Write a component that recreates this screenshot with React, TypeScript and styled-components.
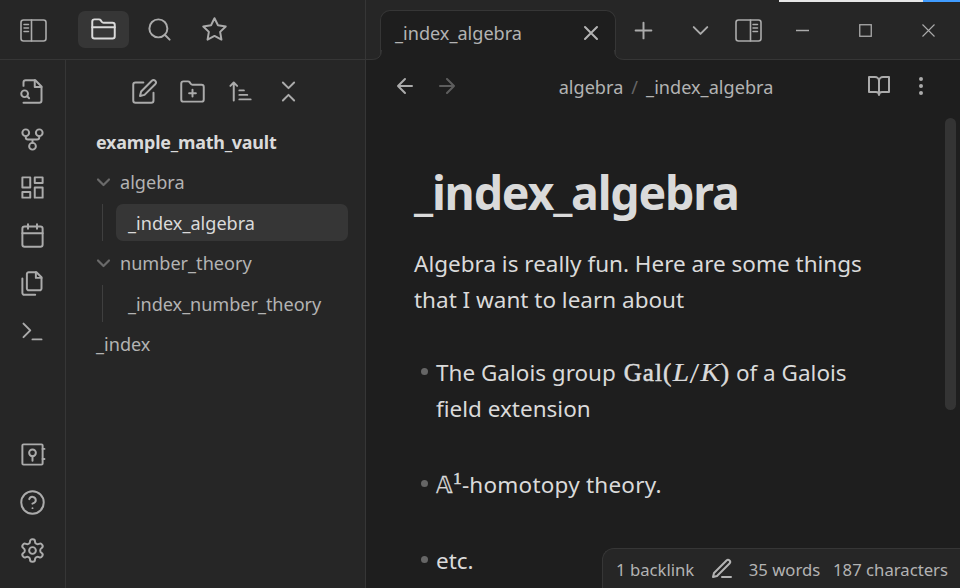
import React from 'react';
import styled, { createGlobalStyle } from 'styled-components';

const GlobalStyle = createGlobalStyle`
  * { box-sizing: border-box; }
  html, body { margin: 0; background: #1e1e1e; }
  body { font-family: 'Noto Sans', 'Open Sans', sans-serif; overflow: hidden; }
  svg { flex: none; }
`;

const line = '#363636';

const Window = styled.div`
  position: relative;
  display: flex;
  width: 960px;
  height: 588px;
  overflow: hidden;
  color: #b3b3b3;
  background: #1e1e1e;
  font-size: 18.1px;
  white-space: nowrap;
`;

const BackgroundEdge = styled.div`
  position: absolute;
  top: 0;
  right: 0;
  width: 181px;
  height: 2px;
  background: linear-gradient(to right, #e6e6e6 144px, #409cff 144px);
`;

const LeftDock = styled.aside`
  display: flex;
  flex-direction: column;
  width: 366px;
  flex: none;
  background: #262626;
  border-right: 1px solid ${line};
`;

const DockHeader = styled.header`
  display: flex;
  align-items: center;
  height: 60px;
  flex: none;
  border-bottom: 1px solid ${line};
  padding-left: 18px;
`;

const IconButton = styled.span<{ $w: number; $h?: number; $active?: boolean }>`
  display: flex;
  align-items: center;
  justify-content: center;
  flex: none;
  width: ${p => p.$w}px;
  height: ${p => p.$h ?? 37}px;
  border-radius: 7px;
  color: ${p => (p.$active ? '#dadada' : '#ababab')};
  background: ${p => (p.$active ? '#363636' : 'transparent')};
`;

const DockToggle = styled.div`
  display: flex;
  padding-top: 1px;
`;

const DockTabs = styled.nav`
  display: flex;
  align-items: center;
  gap: 4.5px;
  margin-left: 29px;
`;

const DockBody = styled.div`
  display: flex;
  flex: 1;
`;

const Ribbon = styled.nav`
  display: flex;
  flex-direction: column;
  justify-content: space-between;
  align-items: center;
  width: 66px;
  padding: 7px 0 14px;
  border-right: 1px solid ${line};
`;

const RibbonGroup = styled.div`
  display: flex;
  flex-direction: column;
`;

const Explorer = styled.section`
  flex: 1;
  padding: 7px 17px 0 30px;
`;

const ExplorerActions = styled.div`
  display: flex;
  margin: 0 0 7px 24px;
`;

const TreeRow = styled.div<{ $title?: boolean }>`
  display: flex;
  align-items: center;
  height: ${p => (p.$title ? 39.5 : 40.5)}px;
  color: ${p => (p.$title ? '#dadada' : '#b3b3b3')};
  font-weight: ${p => (p.$title ? 700 : 400)};
  font-size: ${p => (p.$title ? 17.9 : 18.1)}px;
  letter-spacing: ${p => (p.$title ? -0.2 : 0)}px;
`;

const TreeToggle = styled.span`
  display: flex;
  width: 24px;
  color: #6a6a6a;
`;

const TreeChildren = styled.div`
  display: flex;
  height: 37px;
  margin: 2px 0 1.5px 6px;
  padding-left: 13px;
  border-left: 1px solid #3f3f3f;
`;

const TreeFile = styled.div<{ $selected?: boolean }>`
  display: flex;
  align-items: center;
  flex: 1;
  padding-left: 12px;
  border-radius: 7px;
  letter-spacing: ${p => (p.$selected ? '0' : '-0.05px')};
  color: ${p => (p.$selected ? '#dadada' : '#b3b3b3')};
  background: ${p => (p.$selected ? '#363636' : 'transparent')};
`;

const Workspace = styled.main`
  display: flex;
  flex-direction: column;
  flex: 1;
  min-width: 0;
`;

const TabBar = styled.header`
  display: flex;
  height: 60px;
  flex: none;
  background: linear-gradient(to top, ${line} 1px, #262626 1px);
`;

const Tab = styled.div`
  position: relative;
  display: flex;
  flex: none;
  align-items: center;
  justify-content: space-between;
  width: 236px;
  height: 50px;
  margin: 10px 0 0 14px;
  padding: 0 12px 5px 14px;
  border: 1px solid ${line};
  border-bottom: none;
  border-radius: 10px 10px 0 0;
  color: #b3b3b3;
  background: #1e1e1e;
`;

const TabFoot = styled.svg<{ $side: 'left' | 'right' }>`
  position: absolute;
  bottom: 0;
  ${p => p.$side}: -9px;
  width: 10px;
  height: 10px;
  ${p => (p.$side === 'right' ? 'transform: scaleX(-1);' : '')}
`;

const TabTools = styled.div`
  display: flex;
  align-items: center;
  flex: 1;
  height: 60px;
  padding-left: 9px;
`;

const WindowControls = styled.div`
  display: flex;
  margin-left: 6px;
`;

const ViewHeader = styled.div`
  display: grid;
  grid-template-columns: 104px 1fr 104px;
  align-items: center;
  height: 52px;
  margin-bottom: 2px;
  flex: none;
  padding: 0 18px;
`;

const HeaderGroup = styled.div<{ $end?: boolean }>`
  display: flex;
  justify-content: ${p => (p.$end ? 'flex-end' : 'flex-start')};
`;

const Faded = styled.span`
  display: flex;
  opacity: 0.45;
`;

const Breadcrumb = styled.div`
  display: flex;
  justify-content: center;
  gap: 8px;
  padding: 2px 0 0 6px;
  letter-spacing: 0.02px;
`;

const Slash = styled.span`
  color: #666;
`;

const Scroller = styled.div`
  display: flex;
  justify-content: space-between;
  flex: 1;
  padding: 0 4px 0 48px;
`;

const Scrollbar = styled.div`
  width: 11px;
  height: 292px;
  margin-top: 4px;
  border-radius: 6px;
  background: #343434;
`;

const Note = styled.article`
  width: 480px;
  color: #dadada;
  font-size: 22.5px;
  line-height: 36px;
`;

const Title = styled.h1`
  margin: 48px 0 24px;
  font-size: 46.5px;
  line-height: 60px;
  font-weight: 700;
  letter-spacing: -1.2px;
`;

const Paragraph = styled.p`
  margin: 0 0 37px;
`;

const List = styled.ul`
  display: flex;
  flex-direction: column;
  gap: 40px;
  margin: 0;
  padding: 0;
  list-style: none;
`;

const Item = styled.li<{ $track?: number }>`
  display: flex;
  gap: 8px;
  padding-left: 6.5px;
  letter-spacing: ${p => p.$track ?? 0}px;
`;

const Bullet = styled.span`
  flex: none;
  width: 7.5px;
  height: 7.5px;
  margin-top: 12.5px;
  border-radius: 50%;
  background: #666;
`;

const MathGroup = styled.span`
  margin: 0 0 0 2px;
  font-family: 'Liberation Serif', serif;
  font-size: 25px;
  line-height: 1;
  letter-spacing: 1.1px;
  -webkit-text-stroke: 0.55px #dadada;
`;

const Variable = styled.i`
  display: inline-block;
  margin: 0 2.4px 0 1.2px;
  letter-spacing: 0;
  transform: scaleX(1.18);
  -webkit-text-stroke: 0.2px #dadada;
`;

const Divide = styled.span`
  display: inline-block;
  margin: 0 2.4px 0 1px;
  letter-spacing: 0;
  transform: scale(1.4, 1.2);
  -webkit-text-stroke: 0;
`;

const Blackboard = styled.span`
  font-family: 'DejaVu Sans', sans-serif;
  font-size: 22.5px;
  line-height: 1;
  -webkit-text-stroke: 0.3px #dadada;
`;

const Power = styled.sup`
  font-family: 'Liberation Serif', serif;
  font-size: 17.5px;
  line-height: 0;
  vertical-align: 9px;
  -webkit-text-stroke: 0.5px #dadada;
`;

const StatusBar = styled.footer`
  position: absolute;
  right: 0;
  bottom: 0;
  display: flex;
  align-items: center;
  width: 358px;
  height: 40px;
  padding: 2px 12px 0 13px;
  justify-content: space-between;
  border: 1px solid ${line};
  border-width: 1px 0 0 1px;
  border-radius: 12px 0 0 0;
  background: #262626;
  font-size: 16.7px;
`;

const StatusEdit = styled.span`
  display: flex;
  margin: 0 2px 2px 3px;
`;

function Icon({ size = 27, stroke = 1.75, children }: { size?: number; stroke?: number; children: React.ReactNode }) {
  return (
    <svg width={size} height={size} viewBox="0 0 24 24" fill="none" stroke="currentColor" strokeWidth={stroke} strokeLinecap="round" strokeLinejoin="round">
      {children}
    </svg>
  );
}

function SidebarIcon({ right }: { right?: boolean }) {
  const x = right ? 18 : 4;
  return (
    <svg width="27" height="23" viewBox="0 0 27 23" fill="none" stroke="currentColor" strokeWidth="1.6" strokeLinecap="round">
      <rect x="1" y="1" width="25" height="21" rx="2.5" />
      <path d={right ? 'M15.5 1v21' : 'M11.5 1v21'} />
      <path d={`M${x} 5.5h4.5M${x} 9h4.5M${x} 12.5h4.5`} strokeWidth="1.5" />
    </svg>
  );
}

const CHEVRON = 'm6 9 6 6 6-6';
const FOLDER = 'M4 20h16a2 2 0 0 0 2-2V8a2 2 0 0 0-2-2h-7.93a2 2 0 0 1-1.66-.9l-.82-1.2A2 2 0 0 0 7.93 3H4a2 2 0 0 0-2 2v13c0 1.1.9 2 2 2Z';

const ribbonTop: React.ReactNode[] = [
  <>
    <path d="M4 22h14a2 2 0 0 0 2-2V7.5L14.5 2H6a2 2 0 0 0-2 2v3" />
    <path d="M14 2v6h6" />
    <circle cx="5" cy="14" r="3" />
    <path d="m9 18-1.5-1.5" />
  </>,
  <>
    <circle cx="12" cy="18" r="3" />
    <circle cx="6" cy="6" r="3" />
    <circle cx="18" cy="6" r="3" />
    <path d="M18 9v1a2 2 0 0 1-2 2H8a2 2 0 0 1-2-2V9M12 12v3" />
  </>,
  <path d="M3 3h7v9H3zM14 3h7v5h-7zM14 12h7v9h-7zM3 16h7v5H3z" />,
  <>
    <rect x="3" y="4" width="18" height="18" rx="2" />
    <path d="M16 2v4M8 2v4M3 10h18" />
  </>,
  <>
    <path d="M15.5 2H8.6c-.4 0-.8.2-1.1.5-.3.3-.5.7-.5 1.1v12.8c0 .4.2.8.5 1.1.3.3.7.5 1.1.5h9.8c.4 0 .8-.2 1.1-.5.3-.3.5-.7.5-1.1V6.5L15.5 2z" />
    <path d="M3 7.6v12.8c0 .4.2.8.5 1.1.3.3.7.5 1.1.5h9.8M15 2v5h5" />
  </>,
  <path d="m4 17 6-6-6-6M12 19h8" />,
];

const ribbonBottom: React.ReactNode[] = [
  <>
    <rect x="3" y="3" width="18" height="18" rx="1" />
    <circle cx="12" cy="10.5" r="3" />
    <path d="M12 13.5v4M21 7h1.6M21 16h1.6" />
  </>,
  <>
    <circle cx="12" cy="12" r="10" />
    <path d="M9.09 9a3 3 0 0 1 5.83 1c0 2-3 3-3 3M12 17h.01" />
  </>,
  <>
    <path d="M12.22 2h-.44a2 2 0 0 0-2 2v.18a2 2 0 0 1-1 1.73l-.43.25a2 2 0 0 1-2 0l-.15-.08a2 2 0 0 0-2.73.73l-.22.38a2 2 0 0 0 .73 2.73l.15.1a2 2 0 0 1 1 1.72v.51a2 2 0 0 1-1 1.74l-.15.09a2 2 0 0 0-.73 2.73l.22.38a2 2 0 0 0 2.73.73l.15-.08a2 2 0 0 1 2 0l.43.25a2 2 0 0 1 1 1.73V20a2 2 0 0 0 2 2h.44a2 2 0 0 0 2-2v-.18a2 2 0 0 1 1-1.73l.43-.25a2 2 0 0 1 2 0l.15.08a2 2 0 0 0 2.73-.73l.22-.39a2 2 0 0 0-.73-2.73l-.15-.08a2 2 0 0 1-1-1.74v-.5a2 2 0 0 1 1-1.74l.15-.09a2 2 0 0 0 .73-2.73l-.22-.38a2 2 0 0 0-2.73-.73l-.15.08a2 2 0 0 1-2 0l-.43-.25a2 2 0 0 1-1-1.73V4a2 2 0 0 0-2-2z" />
    <circle cx="12" cy="12" r="3" />
  </>,
];

const explorerActions: React.ReactNode[] = [
  <>
    <path d="M11 4H4a2 2 0 0 0-2 2v14a2 2 0 0 0 2 2h14a2 2 0 0 0 2-2v-7" />
    <path d="M18.5 2.5a2.12 2.12 0 0 1 3 3L12 15l-4 1 1-4Z" />
  </>,
  <>
    <path d="M4 21h16a2 2 0 0 0 2-2V8a2 2 0 0 0-2-2h-7.93a2 2 0 0 1-1.66-.9l-.82-1.2A2 2 0 0 0 7.93 3H4a2 2 0 0 0-2 2v14c0 1.1.9 2 2 2Z" />
    <path d="M12 10.5v6M9 13.5h6" />
  </>,
  <path d="M11 11h4M11 15h7M11 19h10M9 7 6 4 3 7M6 6v14" />,
  <path d="m7 20 5-5 5 5M7 4l5 5 5-5" />,
];

function Folder({ name }: { name: string }) {
  return (
    <TreeRow>
      <TreeToggle>
        <svg width="15" height="12" viewBox="0 0 15 12" fill="none" stroke="currentColor" strokeWidth="2.2" strokeLinecap="round" strokeLinejoin="round">
          <path d="m2 3.5 5.5 5.5L13 3.5" />
        </svg>
      </TreeToggle>
      {name}
    </TreeRow>
  );
}

function Foot({ side }: { side: 'left' | 'right' }) {
  return (
    <TabFoot $side={side} viewBox="0 0 10 10">
      <path d="M0 10V9.5Q9.5 9.5 9.5 0H10V10Z" fill="#1e1e1e" />
      <path d="M0 9.5Q9.5 9.5 9.5 0" fill="none" stroke={line} />
    </TabFoot>
  );
}

export default function App() {
  return (
    <Window>
      <GlobalStyle />
      <LeftDock>
        <DockHeader>
          <DockToggle><IconButton $w={31}><SidebarIcon /></IconButton></DockToggle>
          <DockTabs>
            <IconButton $w={51} $active>
              <Icon><path d={FOLDER} /><path d="M2 10h20" /></Icon>
            </IconButton>
            <IconButton $w={51}>
              <Icon><circle cx="11" cy="11" r="8" /><path d="m21 21-4.3-4.3" /></Icon>
            </IconButton>
            <IconButton $w={51}>
              <Icon><path d="m12 2 3.09 6.26L22 9.27l-5 4.87 1.18 6.88L12 17.77l-6.18 3.25L7 14.14 2 9.27l6.91-1.01z" /></Icon>
            </IconButton>
          </DockTabs>
        </DockHeader>
        <DockBody>
          <Ribbon>
            <RibbonGroup>
              {ribbonTop.map((d, i) => <IconButton key={i} $w={48} $h={48}><Icon>{d}</Icon></IconButton>)}
            </RibbonGroup>
            <RibbonGroup>
              {ribbonBottom.map((d, i) => <IconButton key={i} $w={48} $h={48}><Icon>{d}</Icon></IconButton>)}
            </RibbonGroup>
          </Ribbon>
          <Explorer>
            <ExplorerActions>
              {explorerActions.map((d, i) => <IconButton key={i} $w={48} $h={48}><Icon>{d}</Icon></IconButton>)}
            </ExplorerActions>
            <TreeRow $title>example_math_vault</TreeRow>
            <Folder name="algebra" />
            <TreeChildren><TreeFile $selected>_index_algebra</TreeFile></TreeChildren>
            <Folder name="number_theory" />
            <TreeChildren><TreeFile>_index_number_theory</TreeFile></TreeChildren>
            <TreeRow>_index</TreeRow>
          </Explorer>
        </DockBody>
      </LeftDock>

      <Workspace>
        <TabBar>
          <Tab>
            <Foot side="left" />
            _index_algebra
            <Icon size={24} stroke={2}><path d="M18 6 6 18M6 6l12 12" /></Icon>
            <Foot side="right" />
          </Tab>
          <TabTools>
            <IconButton $w={36}><Icon><path d="M5 12h14M12 5v14" /></Icon></IconButton>
            <IconButton $w={78}><Icon><path d={CHEVRON} /></Icon></IconButton>
            <IconButton $w={18}><SidebarIcon right /></IconButton>
            <WindowControls>
              <IconButton $w={79}>
                <svg width="13" height="13"><path d="M0 6.5h13" stroke="currentColor" strokeWidth="1.5" /></svg>
              </IconButton>
              <IconButton $w={47}>
                <svg width="13" height="13"><rect x=".75" y=".75" width="11.5" height="11.5" fill="none" stroke="currentColor" strokeWidth="1.3" /></svg>
              </IconButton>
              <IconButton $w={79}>
                <svg width="13" height="13"><path d="m.5.5 12 12m0-12-12 12" stroke="currentColor" strokeWidth="1.1" /></svg>
              </IconButton>
            </WindowControls>
          </TabTools>
        </TabBar>

        <ViewHeader>
          <HeaderGroup>
            <IconButton $w={42}><Icon size={24} stroke={2}><path d="m12 19-7-7 7-7M19 12H5" /></Icon></IconButton>
            <IconButton $w={42}><Faded><Icon size={24} stroke={2}><path d="M5 12h14M12 5l7 7-7 7" /></Icon></Faded></IconButton>
          </HeaderGroup>
          <Breadcrumb>
            <span>algebra</span><Slash>/</Slash><span>_index_algebra</span>
          </Breadcrumb>
          <HeaderGroup $end>
            <IconButton $w={42}><Icon size={24} stroke={2}><path d="M2 3h6a4 4 0 0 1 4 4v14a3 3 0 0 0-3-3H2zM22 3h-6a4 4 0 0 0-4 4v14a3 3 0 0 1 3-3h7z" /></Icon></IconButton>
            <IconButton $w={42}><Icon size={24} stroke={2}><circle cx="12" cy="12" r="1" /><circle cx="12" cy="5" r="1" /><circle cx="12" cy="19" r="1" /></Icon></IconButton>
          </HeaderGroup>
        </ViewHeader>

        <Scroller>
          <Note>
            <Title>_index_algebra</Title>
            <Paragraph>Algebra is really fun. Here are some things<br />that I want to learn about</Paragraph>
            <List>
              <Item>
                <Bullet />
                <span>
                  The Galois group <MathGroup>Gal(<Variable>L</Variable><Divide>/</Divide><Variable>K</Variable>)</MathGroup> of a Galois<br />field extension
                </span>
              </Item>
              <Item $track={0.22}>
                <Bullet />
                <span><Blackboard>𝔸</Blackboard><Power>1</Power>-homotopy theory.</span>
              </Item>
              <Item><Bullet /><span>etc.</span></Item>
            </List>
          </Note>
          <Scrollbar />
        </Scroller>
      </Workspace>

      <StatusBar>
        <span>1 backlink</span>
        <StatusEdit>
          <Icon size={24} stroke={2}><path d="M12 20h9M16.5 3.5a2.12 2.12 0 0 1 3 3L7 19l-4 1 1-4Z" /></Icon>
        </StatusEdit>
        <span>35 words</span>
        <span>187 characters</span>
      </StatusBar>
      <BackgroundEdge />
    </Window>
  );
}
